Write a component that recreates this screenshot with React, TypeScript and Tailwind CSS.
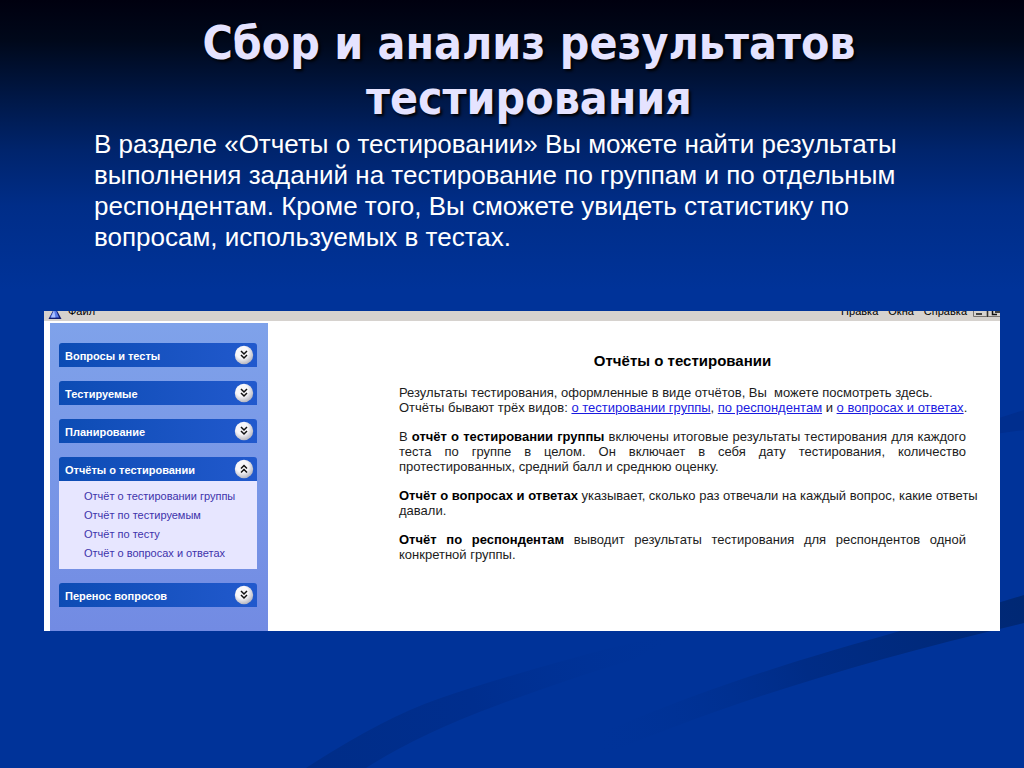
import { useState, type ReactNode } from "react";

const reportLinks = [
  "Отчёт о тестировании группы",
  "Отчёт по тестируемым",
  "Отчёт по тесту",
  "Отчёт о вопросах и ответах",
];

const sections: { title: string; links: string[] }[] = [
  { title: "Вопросы и тесты", links: [] },
  { title: "Тестируемые", links: [] },
  { title: "Планирование", links: [] },
  { title: "Отчёты о тестировании", links: reportLinks },
  { title: "Перенос вопросов", links: [] },
];

function Chevrons({ up }: { up: boolean }) {
  return (
    <svg viewBox="0 0 20 20" className="size-5 shrink-0" aria-hidden="true">
      <defs>
        <radialGradient id="knob" cx="0.4" cy="0.35" r="0.65">
          <stop offset="0.5" stopColor="#f8f7fa" />
          <stop offset="1" stopColor="#b9b9c2" />
        </radialGradient>
      </defs>
      <circle cx="10" cy="10" r="9.2" fill="url(#knob)" />
      <path
        d={up ? "M7 9.5 10 6.5 13 9.5M7 13.5 10 10.5 13 13.5" : "M7 6 10 9 13 6M7 10 10 13 13 10"}
        fill="none"
        stroke="#111"
        strokeWidth="1.5"
      />
    </svg>
  );
}

function Section({ title, links }: { title: string; links: string[] }) {
  const [open, setOpen] = useState(links.length > 0);
  return (
    <section>
      <button
        type="button"
        aria-expanded={open}
        onClick={() => setOpen(!open)}
        className="flex h-6 w-full items-center justify-between rounded-t-[3px] bg-linear-to-r from-[#0c4cb4] to-[#2159cd] pr-[3px] pl-1.5 text-left text-[11px] font-bold text-white"
      >
        <span className="pt-0.5">{title}</span>
        <Chevrons up={open} />
      </button>
      {open && links.length > 0 && (
        <ul className="bg-[#e7e6ff] pt-1.5 pb-1.5 pl-[25px]">
          {links.map((link) => (
            <li key={link} className="text-[11px] leading-[19px] whitespace-nowrap">
              <a href="#" className="text-[#4033ab]">
                {link}
              </a>
            </li>
          ))}
        </ul>
      )}
    </section>
  );
}

function MenuBar() {
  return (
    <div className="flex h-2.5 items-end justify-between overflow-hidden bg-[#d6d2ce] pb-[3px] pl-1 text-[11px] leading-[14px] text-black">
      <div className="flex items-end gap-1.5">
        <svg viewBox="0 0 14 14" className="-mb-0.5 h-3.5 w-3.5" aria-hidden="true">
          <path d="M7 1 13.5 13H.5Z" fill="#111c70" />
          <path d="M7 2 11 11.5H2Z" fill="#5a7be8" />
          <path d="M6 4 7.5 11.5H3Z" fill="#a9c0ff" />
        </svg>
        <button type="button">Файл</button>
      </div>
      <div className="flex items-end gap-2.5">
        <button type="button">Правка</button>
        <button type="button">Окна</button>
        <button type="button">Справка</button>
        <svg viewBox="0 0 27 14" className="-ml-1 h-3.5 w-[27px]" aria-hidden="true">
          <path d="M.5 0V12.500H14V0M15 0V12.500H27" fill="none" stroke="#77736f" />
          <path d="M14.500 0V13" stroke="#33302e" />
          <path d="M3 10H9" stroke="#111" strokeWidth="1.500" />
          <path d="M19.500 4V10.500H24M22 8H27" fill="none" stroke="#111" strokeWidth="1.500" />
        </svg>
      </div>
    </div>
  );
}

function FullLine({ children }: { children: ReactNode }) {
  return <span className="block whitespace-nowrap text-justify [text-align-last:justify]">{children}</span>;
}

function Report() {
  return (
    <article className="min-w-0 flex-1 pt-7 pr-[34px] pb-[60px] pl-[131px] text-[13px] leading-[15px] text-[#1c1c1c]">
      <h2 className="text-center text-[15px] leading-5 font-bold text-black">Отчёты о тестировании</h2>
      <div className="flex flex-col gap-3.5 pt-3.5">
        <p className="whitespace-nowrap">
          Результаты тестирования, оформленные в виде отчётов, Вы&nbsp; можете посмотреть здесь.
          <br />
          Отчёты бывают трёх видов:{" "}
          <a href="#" className="text-[#1a1ae0] underline">о тестировании группы</a>,{" "}
          <a href="#" className="text-[#1a1ae0] underline">по респондентам</a> и{" "}
          <a href="#" className="text-[#1a1ae0] underline">о вопросах и ответах</a>.
        </p>
        <p>
          <FullLine>
            В <b className="text-black">отчёт о тестировании группы</b> включены итоговые результаты тестирования для
            каждого
          </FullLine>
          <FullLine>теста по группе в целом. Он включает в себя дату тестирования, количество</FullLine>
          протестированных, средний балл и среднюю оценку.
        </p>
        <p>
          <FullLine>
            <b className="text-black">Отчёт о вопросах и ответах</b> указывает, сколько раз отвечали на каждый вопрос,
            какие ответы
          </FullLine>
          давали.
        </p>
        <p>
          <FullLine>
            <b className="text-black">Отчёт по респондентам</b> выводит результаты тестирования для респондентов одной
          </FullLine>
          конкретной группы.
        </p>
      </div>
    </article>
  );
}

function Sweeps() {
  return (
    <svg
      viewBox="0 0 1024 768"
      preserveAspectRatio="none"
      className="pointer-events-none absolute inset-0 h-full w-full"
      aria-hidden="true"
    >
      <defs>
        <linearGradient id="left" gradientUnits="userSpaceOnUse" x1="310" y1="768" x2="680" y2="640">
          <stop offset="0" stopColor="#002d88" />
          <stop offset="0.45" stopColor="#002e8e" />
          <stop offset="1" stopColor="#003399" stopOpacity="0" />
        </linearGradient>
        <linearGradient id="right" gradientUnits="userSpaceOnUse" x1="1024" y1="600" x2="590" y2="745">
          <stop offset="0" stopColor="#002874" />
          <stop offset="0.5" stopColor="#002c86" />
          <stop offset="1" stopColor="#003399" stopOpacity="0" />
        </linearGradient>
      </defs>
      <path d="M306 768Q383 718 438 699T577 657 680 636L632 660Q577 676 498 705T366 768Z" fill="url(#left)" />
      <path d="M1024 595Q960 615 900 631C810 657 715 683 580 742L600 757C715 707 854 663 1024 623Z" fill="url(#right)" />
      <path d="M980 424 1024 410V430L980 436Z" fill="#002e8e" />
    </svg>
  );
}

export default function App() {
  return (
    <div className="relative min-h-screen overflow-hidden bg-[#003399] bg-[linear-gradient(to_bottom,#00000f_0px,#00081a_40px,#001848_100px,#00246c_150px,#002d88_205px,#003399_290px)] font-['Liberation_Sans',Arial,sans-serif]">
      <Sweeps />
      <main className="relative pt-4 pr-6 pl-11">
        <h1 className="mx-auto max-w-[700px] pl-3.5 text-center font-['DejaVu_Sans_Condensed',Tahoma,sans-serif] text-[46px] leading-[55px] font-bold text-[#e5e3ff] [text-shadow:2px_2px_3px_#000]">
          Сбор и анализ результатов тестирования
        </h1>
        <p className="max-w-[870px] pt-[3px] pl-[50px] text-[26px] leading-[31px] text-white">
          В разделе «Отчеты о тестировании» Вы можете найти результаты выполнения заданий на тестирование по группам и по
          отдельным респондентам. Кроме того, Вы сможете увидеть статистику по вопросам, используемых в тестах.
        </p>
        <div className="mt-[58px] overflow-hidden bg-white">
          <MenuBar />
          <div className="flex pt-0.5 pl-1.5">
            <nav className="flex w-[218px] shrink-0 flex-col gap-3.5 bg-linear-to-b from-[#7fa2ea] to-[#728be3] pt-5 pr-[11px] pb-6 pl-[9px]">
              {sections.map((s) => (
                <Section key={s.title} title={s.title} links={s.links} />
              ))}
            </nav>
            <Report />
          </div>
        </div>
      </main>
    </div>
  );
}
